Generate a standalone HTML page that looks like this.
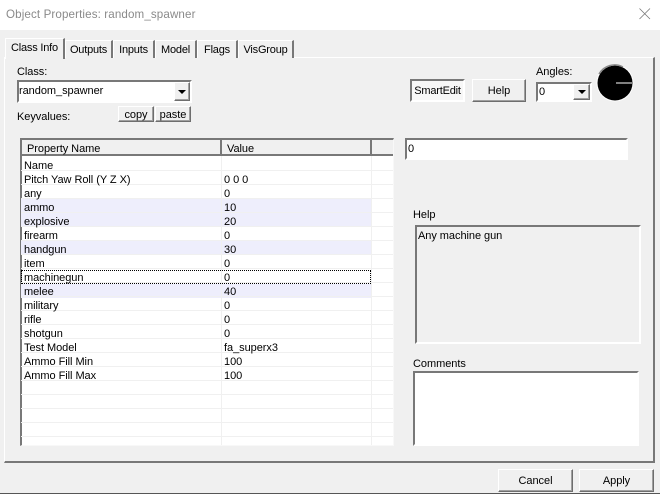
<!DOCTYPE html>
<html><head><meta charset="utf-8">
<style>
html,body{margin:0;padding:0;width:660px;height:494px;overflow:hidden;background:#f0f0f0}
body{position:relative;font-family:"Liberation Sans",sans-serif;font-size:11px;letter-spacing:-.05px;color:#000}
div{position:absolute;box-sizing:border-box;white-space:nowrap}
.t{line-height:14px;height:14px}
.btn{background:#f0f0f0;border:1px solid;border-color:#fff #6e6e6e #6e6e6e #fff;box-shadow:inset -1px -1px 0 #a0a0a0;text-align:center}
.sunk{border:2px solid;border-color:#787878 #fff #fff #787878;background:#fff}
.tab{background:#f0f0f0;border:1px solid;border-color:#fff #787878 #f0f0f0 #fff;border-width:1px 2px 0 1px;text-align:center;top:40px;height:18px;line-height:19px;font-size:11px;letter-spacing:-.2px}
.row{left:21px;width:372px;height:14px;border-bottom:1px solid #f0f0f0}
.hl{left:21px;width:350px;height:14px;background:#eeeefc}
.n{left:24px;margin-top:1px}.v{left:224px;margin-top:1px}
.arr{width:0;height:0;border:4px solid transparent;border-top:4px solid #000;border-bottom:0}
</style></head><body>
<div style="left:0;top:0;width:660px;height:30px;background:#fff"></div>
<div class="t" style="left:6px;top:8px;color:#8a8a8a;font-size:11.6px;letter-spacing:.12px">Object Properties: random_spawner</div>
<svg style="position:absolute;left:638px;top:7px" width="14" height="14"><path d="M1.5 1.5L12 12M12 1.5L1.5 12" stroke="#777" stroke-width=".8" fill="none"/></svg>

<!-- panel -->
<div style="left:4px;top:57px;width:651px;height:406px;border:1px solid;border-color:#fff #787878 #787878 #fff;border-width:1px 2px 2px 1px"></div>

<!-- tabs -->
<div class="tab" style="left:65px;width:48px">Outputs</div>
<div class="tab" style="left:113px;width:42px">Inputs</div>
<div class="tab" style="left:155px;width:42px">Model</div>
<div class="tab" style="left:197px;width:41px">Flags</div>
<div class="tab" style="left:238px;width:56px">VisGroup</div>
<div class="tab" style="left:5px;top:38px;width:60px;height:21px;line-height:19px">Class Info</div>

<div class="t" style="left:17px;top:65px">Class:</div>
<div class="sunk" style="left:17px;top:80px;width:175px;height:23px"></div>
<div class="t" style="left:19px;top:84px">random_spawner</div>
<div class="btn" style="left:174px;top:82px;width:16px;height:19px"><div class="arr" style="left:3px;top:7px"></div></div>
<div class="t" style="left:17px;top:110px">Keyvalues:</div>
<div class="btn t" style="left:118px;top:106px;width:36px;height:16px;line-height:16px">copy</div>
<div class="btn t" style="left:155px;top:106px;width:36px;height:16px;line-height:16px">paste</div>

<!-- table -->
<div style="left:20px;top:138px;width:374px;height:308px;background:#fff;border:1px solid;border-width:2px 1px 1px 2px;border-color:#787878 #f8f8f8 #f8f8f8 #787878"></div>
<div style="left:22px;top:140px;width:371px;height:16px;background:#f0f0f0;border-bottom:2px solid #787878"></div>
<div style="left:220px;top:140px;width:2px;height:16px;background:#787878"></div>
<div style="left:370px;top:140px;width:2px;height:16px;background:#787878"></div>
<div class="t" style="left:27px;top:142px">Property Name</div>
<div class="t" style="left:227px;top:142px">Value</div>

<div class="hl" style="top:199px"></div>
<div class="hl" style="top:213px"></div>
<div class="hl" style="top:241px"></div>
<div class="hl" style="top:284px"></div>

<div class="row" style="top:157px"></div><div class="row" style="top:171px"></div>
<div class="row" style="top:185px"></div><div class="row" style="top:199px"></div>
<div class="row" style="top:213px"></div><div class="row" style="top:227px"></div>
<div class="row" style="top:241px"></div><div class="row" style="top:255px"></div>
<div class="row" style="top:269px"></div><div class="row" style="top:283px"></div>
<div class="row" style="top:297px"></div><div class="row" style="top:311px"></div>
<div class="row" style="top:325px"></div><div class="row" style="top:339px"></div>
<div class="row" style="top:353px"></div><div class="row" style="top:367px"></div>
<div class="row" style="top:381px"></div><div class="row" style="top:395px"></div>
<div class="row" style="top:409px"></div><div class="row" style="top:423px"></div>
<div style="left:221px;top:156px;width:1px;height:289px;background:#f0f0f0"></div>
<div style="left:371px;top:156px;width:1px;height:289px;background:#f0f0f0"></div>
<div style="left:21px;top:270px;width:350px;height:14px;border:1px dotted #000"></div>

<div class="t n" style="top:158px">Name</div>
<div class="t n" style="top:172px">Pitch Yaw Roll (Y Z X)</div><div class="t v" style="top:172px">0 0 0</div>
<div class="t n" style="top:186px">any</div><div class="t v" style="top:186px">0</div>
<div class="t n" style="top:200px">ammo</div><div class="t v" style="top:200px">10</div>
<div class="t n" style="top:214px">explosive</div><div class="t v" style="top:214px">20</div>
<div class="t n" style="top:228px">firearm</div><div class="t v" style="top:228px">0</div>
<div class="t n" style="top:242px">handgun</div><div class="t v" style="top:242px">30</div>
<div class="t n" style="top:256px">item</div><div class="t v" style="top:256px">0</div>
<div class="t n" style="top:270px">machinegun</div><div class="t v" style="top:270px">0</div>
<div class="t n" style="top:284px">melee</div><div class="t v" style="top:284px">40</div>
<div class="t n" style="top:298px">military</div><div class="t v" style="top:298px">0</div>
<div class="t n" style="top:312px">rifle</div><div class="t v" style="top:312px">0</div>
<div class="t n" style="top:326px">shotgun</div><div class="t v" style="top:326px">0</div>
<div class="t n" style="top:340px">Test Model</div><div class="t v" style="top:340px">fa_superx3</div>
<div class="t n" style="top:354px">Ammo Fill Min</div><div class="t v" style="top:354px">100</div>
<div class="t n" style="top:368px">Ammo Fill Max</div><div class="t v" style="top:368px">100</div>

<!-- right top -->
<div class="sunk" style="left:410px;top:79px;width:55px;height:23px;background:#f7f7f7;text-align:center;line-height:20px;letter-spacing:-.2px">SmartEdit</div>
<div class="btn" style="left:472px;top:79px;width:54px;height:23px;line-height:22px">Help</div>
<div class="t" style="left:536px;top:65px">Angles:</div>
<div class="sunk" style="left:536px;top:82px;width:56px;height:20px"></div>
<div class="t" style="left:539px;top:85px">0</div>
<div class="btn" style="left:573px;top:84px;width:17px;height:16px"><div class="arr" style="left:4px;top:5px"></div></div>
<svg style="position:absolute;left:595px;top:62px" width="42" height="42">
<circle cx="20" cy="21" r="18.5" fill="#fff"/>
<circle cx="20" cy="21" r="17.5" fill="#000"/>
<path d="M4 12A18 18 0 0 1 28 5" stroke="#8a8a8a" stroke-width="1.5" fill="none"/>
<path d="M21 21H37" stroke="#fff" stroke-width="1"/>
</svg>
<div class="sunk" style="left:405px;top:138px;width:223px;height:22px"></div>
<div class="t" style="left:408px;top:142px">0</div>

<div class="t" style="left:413px;top:208px">Help</div>
<div class="sunk" style="left:415px;top:225px;width:226px;height:119px;background:#f0f0f0"></div>
<div class="t" style="left:418px;top:229px">Any machine gun</div>
<div class="t" style="left:413px;top:357px">Comments</div>
<div class="sunk" style="left:413px;top:371px;width:226px;height:75px"></div>

<div class="btn" style="left:498px;top:469px;width:75px;height:23px;line-height:22px">Cancel</div>
<div class="btn" style="left:579px;top:469px;width:75px;height:23px;line-height:22px">Apply</div>
<div style="left:0;top:493px;width:660px;height:1px;background:#555"></div>
</body></html>
